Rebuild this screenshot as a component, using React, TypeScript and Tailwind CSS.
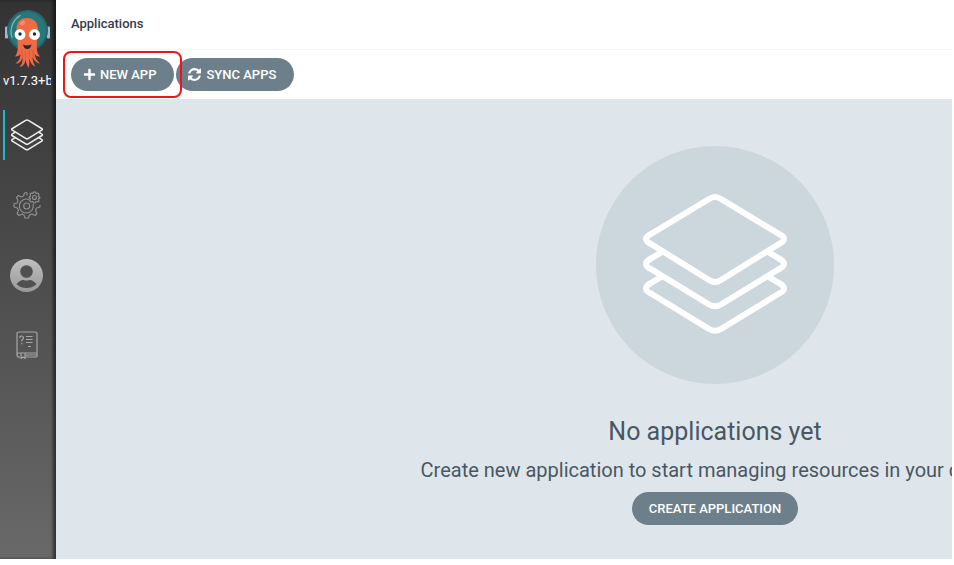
import React from 'react'
import clsx from 'clsx'
import { FaPlus } from 'react-icons/fa'

type IconProps = { className?: string }

const LayersPaths = () => (
  <g fill="none" stroke="currentColor" strokeLinejoin="round">
    <path d="M113 53Q119 49 125 53L183 88Q193 93 183 98L125 134Q119 138 113 134L55 98Q45 93 55 88Z" />
    <path d="M66 106L55 112.500Q45 118 55 123L113 158.500Q119 162 125 158.500L183 123Q193 118 183 112.500L172 106" />
    <path d="M66 130.500L55 137Q45 142.500 55 147.500L113 183Q119 186.500 125 183L183 147.500Q193 142.500 183 137L172 130.500" />
  </g>
)

const LayersIcon = ({ className }: IconProps) => (
  <svg viewBox="47 47 144 143" strokeWidth="7" className={className} aria-hidden="true">
    <LayersPaths />
  </svg>
)

const RefreshIcon = ({ className }: IconProps) => (
  <svg viewBox="0 128 1536 1536" fill="currentColor" className={className} aria-hidden="true">
    <path d="M1511 1056q0 5-1 7-64 268-268 434.500t-478 166.500q-146 0-282.500-55t-243.500-157l-129 129q-19 19-45 19t-45-19-19-45v-448q0-26 19-45t45-19h448q26 0 45 19t19 45-19 45l-137 137q71 66 161 102t187 36q134 0 250-65t186-179q11-17 53-117 8-23 30-23h192q13 0 22.500 9.500t9.500 22.500zm25-800v448q0 26-19 45t-45 19h-448q-26 0-45-19t-19-45 19-45l138-138q-148-137-349-137-134 0-250 65t-186 179q-11 17-53 117-8 23-30 23h-199q-13 0-22.500-9.500t-9.500-22.500v-7q65-268 270-434.500t480-166.500q146 0 284 55.500t245 156.500l130-129q19-19 45-19t45 19 19 45z" />
  </svg>
)

const ArgoLogo = ({ className }: IconProps) => (
  <svg viewBox="0 0 46 60" className={className} aria-hidden="true">
    <rect x="1" y="18" width="3" height="12" rx="1" fill="#9fb9cf" />
    <rect x="43" y="18" width="3" height="12" rx="1" fill="#9fb9cf" />
    <circle cx="23.500" cy="22" r="20.500" fill="#22686c" />
    <circle cx="23.500" cy="22" r="18.500" fill="#28787a" />
    <path d="M8 29C5 19 10 11 16 7" fill="none" stroke="#83b5b5" strokeWidth="1.200" strokeLinecap="round" />
    <path
      d="M23 9.500C16 9.500 12.500 14 12.500 21L13.500 33C14 40 14 44 11 48C14.500 48 15.500 47 16.500 45.500C16.500 50 14.500 53 11.500 55C15.500 55.500 18 52 18.500 48C19 53 18 56 15.500 58.500C19.500 58 21 55 21.500 51C22 54 23 57 24.500 59.500C25.500 57 25.500 54 25.300 50C26.500 54 28 57 31.500 58C29.500 55 28.500 52 28.500 48C30 52 32 54.500 36 55C32.500 52 31 49 30.500 45C31.500 47 33 48.500 36 48C32.500 44 32.500 40 33 33L34 21C34 14 30 9.500 23 9.500Z"
      fill="#ef6a45"
    />
    <ellipse cx="18.500" cy="14.500" rx="3" ry="2" fill="#f7a183" opacity=".6" transform="rotate(-35 18.500 14.500)" />
    <path d="M18 41V48M21.500 42V51M25.300 42V50M29 41V48" stroke="#dc5939" strokeWidth=".800" />
    <circle cx="16" cy="26" r="5.400" fill="#fff" />
    <circle cx="30.500" cy="26" r="5.400" fill="#fff" />
    <circle cx="16" cy="25.500" r="1.700" fill="#182c31" />
    <circle cx="30.500" cy="25.500" r="1.700" fill="#182c31" />
    <path d="M19 36Q23 38 27.500 36Q26.500 40.500 23.300 40.500Q20 40.500 19 36Z" fill="#202a2f" />
  </svg>
)

const GearsIcon = ({ className }: IconProps) => (
  <svg viewBox="0 0 28 28" strokeWidth="1.100" className={className} fill="none" stroke="currentColor" strokeLinejoin="round" aria-hidden="true">
    <path d="M14 4.500V1.500M10.500 5L8.500 6L5.500 4.500L3.500 6.500L5 9.500L4 12L1 13V16L4.300 17L5.500 19.500L4 22.500L6 24.500L9 23L11 24L12 27H15.500L16.500 24L19 23L22 24.500L24 22.500L22.500 19.500L23.500 17L27 16V14" />
    <path d="M14 1.500L11.500 2L10.500 5M16 8.600A7 7 0 1 0 20 13" />
    <circle cx="13.700" cy="15" r="3" />
    <circle cx="21.500" cy="6.500" r="2" />
    <path d="M20.500 1H22.500L23 2.500L25 2L26 3.500L25.500 5.500L27 6.500L25.500 8L26 10L24.500 11L23 10.500L22 12H20.500L20 10.500L18 11L16.500 9.500L17.500 8L16 6.500L17.500 5L17 3L18.500 2L20 2.500Z" />
  </svg>
)

const UserIcon = ({ className }: IconProps) => (
  <svg viewBox="0 0 33 33" className={className} aria-hidden="true">
    <defs>
      <linearGradient id="user-fill" x1="0" y1="0" x2="0" y2="1">
        <stop stopColor="#c0c0c0" />
        <stop offset="1" stopColor="#999" />
      </linearGradient>
    </defs>
    <circle cx="16.500" cy="16.500" r="16.500" fill="url(#user-fill)" />
    <circle cx="16.500" cy="12.500" r="6.300" fill="#505050" />
    <path d="M6.500 25C9.500 21.500 12 20.700 13.500 21Q16.500 22.200 19.500 21C21 20.700 23.500 21.500 26.500 25C23.500 28 20 29 16.500 29S9.500 28 6.500 25Z" fill="#505050" />
  </svg>
)

const DocsIcon = ({ className }: IconProps) => (
  <svg viewBox="0 0 22 28" strokeWidth="1.200" className={className} fill="none" stroke="currentColor" aria-hidden="true">
    <path d="M4 26H3Q1 26 1 24V3Q1 1 3 1H19Q21 1 21 3V22H3Q1 22 1 24M9 26H21M9 24H21M21 22V26M5 22V27.500L7 26L9 27.500V22" />
    <path d="M10 5.500H16.500M10 8.500H16.500M10 11.500H16.500M12 15.500H15M3.800 7Q3.800 5 5.500 5Q7.500 5 7.500 7Q7.500 8 5.800 9V10.500M5.800 12V13.300" />
  </svg>
)

type NavItem = { label: string; href: string; icon: React.ReactNode; active?: boolean }

const navItems: NavItem[] = [
  { label: 'Applications', href: '#applications', icon: <LayersIcon className="h-8 w-8 text-[#eee]" />, active: true },
  { label: 'Settings', href: '#settings', icon: <GearsIcon className="h-7 w-7 text-[#929292]" /> },
  { label: 'User info', href: '#user-info', icon: <UserIcon className="h-[33px] w-[33px]" /> },
  { label: 'Documentation', href: '#help', icon: <DocsIcon className="h-7 w-[22px] text-[#a5a5a5]" /> },
]

const Sidebar = () => (
  <aside className="flex w-14 shrink-0 flex-col bg-linear-to-b from-[#333] to-[#696969] shadow-[inset_-3px_0_3px_rgba(0,0,0,0.5)]">
    <div className="flex h-[102px] flex-col pt-2">
      <ArgoLogo className="ml-1 h-[61px] w-[46px]" />
      <div className="mr-[5px] ml-[3px] overflow-hidden text-[13px] leading-6 whitespace-nowrap text-white">
        v1.7.3+b77f6d9
      </div>
    </div>
    <nav className="flex flex-col gap-5 pt-2">
      {navItems.map(item => (
        <a
          key={item.label}
          href={item.href}
          aria-label={item.label}
          className={clsx(
            'ml-[3px] flex h-[50px] items-center justify-center border-l-2 pr-2',
            item.active ? 'border-[#18bcce]' : 'border-transparent',
          )}>
          {item.icon}
        </a>
      ))}
    </nav>
  </aside>
)

const Button = ({ children, className }: { children: React.ReactNode; className?: string }) => (
  <button
    type="button"
    className={clsx(
      'flex h-[33px] items-center rounded-full bg-[#6d7f8b] text-[13px] font-medium whitespace-nowrap text-white',
      className,
    )}>
    {children}
  </button>
)

const EmptyState = () => (
  <section className="flex grow flex-col items-center bg-[#dee6eb] pt-[47px] text-[#495763]">
    <svg viewBox="0 0 238 238" strokeWidth="6" className="h-[238px] w-[238px] text-white" aria-hidden="true">
      <circle cx="119" cy="119" r="119" fill="#ccd6dd" />
      <LayersPaths />
    </svg>
    <h4 className="mt-8 text-[25px] leading-8">No applications yet</h4>
    <h5 className="mt-2 text-xl leading-7">Create new application to start managing resources in your cluster</h5>
    <Button className="mt-2 px-[17px]">CREATE APPLICATION</Button>
  </section>
)

const App = () => (
  <div className="h-screen bg-white pr-0.5 pb-1.5 font-['Roboto',sans-serif]">
    <div className="flex h-full overflow-hidden">
      <Sidebar />
      <div className="min-w-0 grow overflow-hidden">
        <main className="flex h-full min-w-[1318px] flex-col">
          <header className="flex h-[50px] items-center border-b border-[#f3f5f6] px-[15px] pb-0.5 text-[13px] font-medium text-[#363c4a]">
            <h1>Applications</h1>
          </header>
          <div className="flex h-[49px] items-center gap-0.5 px-[15px]">
            <div className="relative">
              <Button className="gap-1 pr-[18px] pl-3">
                <FaPlus className="h-[13px] w-[13px]" />
                NEW APP
              </Button>
              <span className="pointer-events-none absolute -inset-x-2 -inset-y-[7px] rounded-lg border-2 border-[#f01515]" />
            </div>
            <Button className="gap-[5px] pr-[18px] pl-3">
              <RefreshIcon className="h-[13px] w-[13px]" />
              SYNC APPS
            </Button>
          </div>
          <EmptyState />
        </main>
      </div>
    </div>
  </div>
)

export default App
